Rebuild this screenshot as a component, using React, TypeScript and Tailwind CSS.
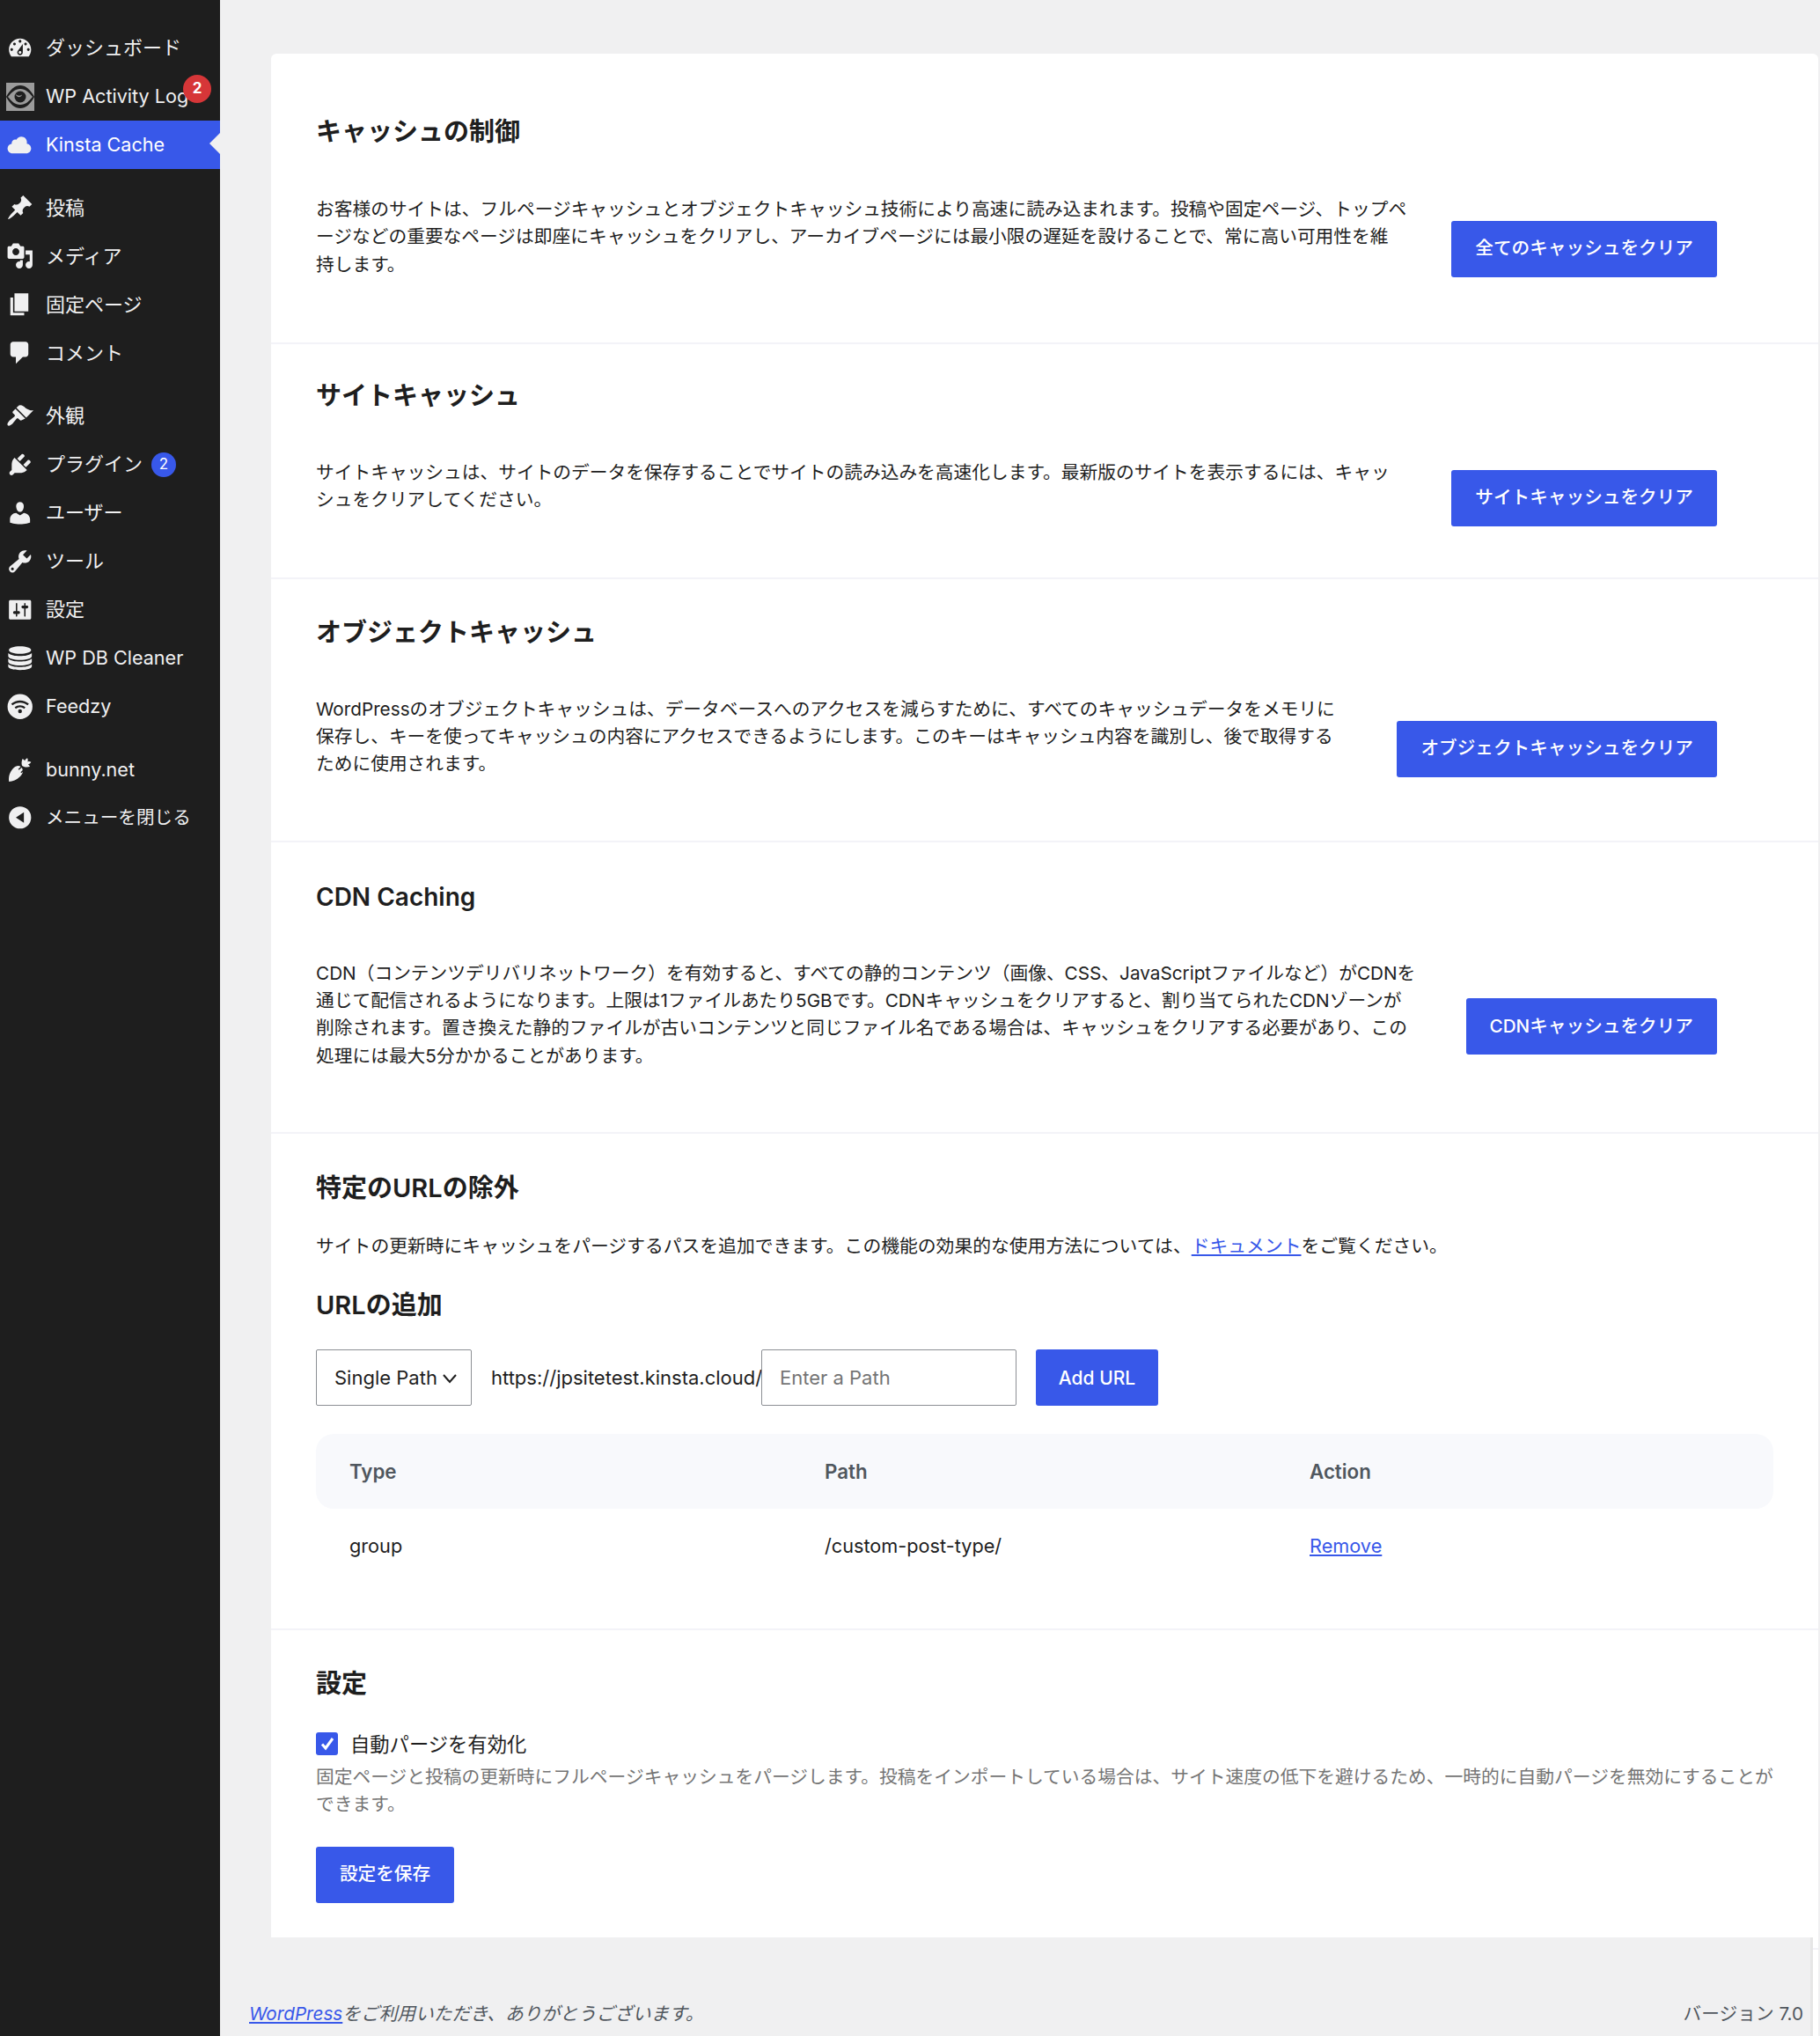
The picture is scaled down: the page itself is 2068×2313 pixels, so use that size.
import React from 'react';

const FONT = 'font-[Inter,"Noto_Sans_CJK_JP",sans-serif]';

const dash: Record<string, string> = {
  dashboard: 'M3.76 16h12.48c1.1-1.37 1.76-3.11 1.76-5 0-4.42-3.58-8-8-8s-8 3.58-8 8c0 1.89.66 3.63 1.76 5zM10 4c.55 0 1 .45 1 1s-.45 1-1 1-1-.45-1-1 .45-1 1-1zM6 6c.55 0 1 .45 1 1s-.45 1-1 1-1-.45-1-1 .45-1 1-1zm8 0c.55 0 1 .45 1 1s-.45 1-1 1-1-.45-1-1 .45-1 1-1zm-5.37 5.55L12 7v6c0 1.1-.9 2-2 2s-2-.9-2-2c0-.57.24-1.08.63-1.45zM4 10c.55 0 1 .45 1 1s-.45 1-1 1-1-.45-1-1 .45-1 1-1zm12 0c.55 0 1 .45 1 1s-.45 1-1 1-1-.45-1-1 .45-1 1-1zm-5 3c0-.55-.45-1-1-1s-1 .45-1 1 .45 1 1 1 1-.45 1-1z',
  cloud: 'M14.9 9c1.8.2 3.1 1.7 3.1 3.5 0 1.9-1.6 3.5-3.5 3.5h-10C2.6 16 1 14.4 1 12.5 1 10.7 2.3 9.3 4.1 9 4 8.9 4 8.7 4 8.5 4 7.1 5.1 6 6.5 6c.3 0 .7.1.9.2C8.1 4.9 9.4 4 11 4c2.2 0 4 1.8 4 4 0 .4-.1.7-.1 1z',
  post: 'M10.44 3.02l1.82-1.82 6.36 6.35-1.83 1.82c-1.05-.68-2.48-.57-3.41.36l-.75.75c-.92.93-1.04 2.35-.35 3.41l-1.83 1.82-2.41-2.41-2.8 2.79c-.42.42-3.38 2.71-3.8 2.29s1.86-3.39 2.28-3.81l2.79-2.79L4.1 9.36l1.83-1.82c1.05.69 2.48.57 3.4-.36l.75-.75c.93-.92 1.05-2.35.36-3.41z',
  media: 'M13 11V4c0-.55-.45-1-1-1h-1.67L9 1H5L3.67 3H2c-.55 0-1 .45-1 1v7c0 .55.45 1 1 1h10c.55 0 1-.45 1-1zM7 4.5c1.38 0 2.5 1.12 2.5 2.5S8.38 9.5 7 9.5 4.5 8.38 4.5 7 5.62 4.5 7 4.5zM14 6h5v10.5c0 1.38-1.12 2.5-2.5 2.5S14 17.88 14 16.5s1.12-2.5 2.5-2.5c.17 0 .34.02.5.05V9h-3V6zm-4 8.05V13h2v3.5c0 1.38-1.12 2.5-2.5 2.5S7 17.88 7 16.5 8.12 14 9.5 14c.17 0 .34.02.5.05z',
  page: 'M6 15V2h10v13H6zm-1 1h8v2H3V5h2v11z',
  comments: 'M5 2h9c1.1 0 2 .9 2 2v7c0 1.1-.9 2-2 2h-2l-5 5v-5H5c-1.1 0-2-.9-2-2V4c0-1.1.9-2 2-2z',
  appearance: 'M14.48 11.06L7.41 3.99l1.5-1.5c.5-.56 2.3-.47 3.51.32 1.21.8 1.43 1.28 2.91 2.1 1.18.64 2.45 1.26 4.45.85zm-.71.71L6.7 4.7 4.93 6.47c-.39.39-.39 1.02 0 1.41l1.06 1.06c.39.39.39 1.03 0 1.42-.6.6-1.43 1.11-2.21 1.69-.35.26-.7.53-1.01.84-1.34 1.34-2.37 2.95-1.58 3.74s2.4-.24 3.74-1.58c.31-.31.58-.66.84-1.01.58-.78 1.09-1.61 1.69-2.21.39-.39 1.03-.39 1.42 0l1.06 1.06c.39.39 1.02.39 1.41 0z',
  plugins: 'M13.11 4.36L9.87 7.6 8 5.73l3.24-3.24c.35-.34 1.05-.2 1.56.32.52.51.66 1.21.31 1.55zm-8 1.77l.91-1.12 9.01 9.01-1.19.84c-.71.71-2.63 1.16-3.82 1.16H6.14L4.9 17.26c-.59.59-1.54.59-2.12 0-.59-.58-.59-1.53 0-2.12l1.24-1.24v-3.88c0-1.13.4-3.19 1.09-3.89zm7.26 3.97l3.24-3.24c.34-.35 1.04-.21 1.55.31.52.51.66 1.21.31 1.55l-3.24 3.25z',
  users: 'M10 9.25c-2.27 0-2.73-3.44-2.73-3.44C7 4.02 7.82 2 9.97 2c2.16 0 2.98 2.02 2.71 3.81 0 0-.41 3.44-2.68 3.44zm0 2.57L12.72 10c2.39 0 4.52 2.33 4.52 4.53v2.49s-3.65 1.13-7.24 1.13c-3.65 0-7.24-1.13-7.24-1.13v-2.49c0-2.25 1.94-4.48 4.47-4.48z',
  tools: 'M16.68 9.77c-1.34 1.34-3.3 1.67-4.95.99l-5.41 6.52c-.99.99-2.59.99-3.58 0s-.99-2.59 0-3.57l6.52-5.42c-.68-1.65-.35-3.61.99-4.95 1.28-1.28 3.12-1.62 4.72-1.06l-2.89 2.89 2.82 2.82 2.86-2.87c.53 1.58.18 3.39-1.08 4.65zM3.81 16.21c.4.39 1.04.39 1.43 0 .4-.4.4-1.04 0-1.43-.39-.4-1.03-.4-1.43 0-.39.39-.39 1.03 0 1.43z',
  settings: 'M18 16V4c0-.55-.45-1-1-1H3c-.55 0-1 .45-1 1v12c0 .55.45 1 1 1h14c.55 0 1-.45 1-1zM8 11h1c.55 0 1 .45 1 1s-.45 1-1 1H8v1.5c0 .28-.22.5-.5.5s-.5-.22-.5-.5V13H6c-.55 0-1-.45-1-1s.45-1 1-1h1V5.5c0-.28.22-.5.5-.5s.5.22.5.5V11zm5-2h-1c-.55 0-1-.45-1-1s.45-1 1-1h1V5.5c0-.28.22-.5.5-.5s.5.22.5.5V7h1c.55 0 1 .45 1 1s-.45 1-1 1h-1v5.5c0 .28-.22.5-.5.5s-.5-.22-.5-.5V9z',
  db: 'M10 1.500c4.400 0 8 1.100 8 2.700s-3.600 2.700-8 2.700-8-1.100-8-2.700 3.600-2.700 8-2.700zM1.500 6.300c1.600 1.500 5 2.100 8.500 2.100s6.900-.6 8.500-2.100v2.300c0 1.500-3.800 2.700-8.500 2.700s-8.500-1.200-8.500-2.700zM1.500 10.300c1.600 1.500 5 2.100 8.500 2.100s6.900-.6 8.500-2.100v2.300c0 1.500-3.800 2.700-8.500 2.700s-8.500-1.200-8.500-2.700zM1.500 14.300c1.600 1.500 5 2.100 8.500 2.100s6.900-.6 8.500-2.100v1.700c0 1.400-3.800 2.500-8.500 2.500s-8.500-1.100-8.500-2.500z',
  feedzy: 'M10 1a9 9 0 1 0 0 18 9 9 0 0 0 0-18zm0 13.700a1.400 1.400 0 1 1 0-2.800 1.400 1.400 0 0 1 0 2.800zm3-3.100c-1.800-1.400-4.200-1.400-6 0l-.9-1.100c2.300-1.900 5.500-1.900 7.800 0zm2.400-2.500c-3.200-2.700-7.600-2.700-10.800 0l-1-1.100c3.700-3.300 9.100-3.300 12.800 0z',
  carrot: 'M2 18.500c-.3-2.800.4-6.300 3-9 1.700-1.800 4-2.600 5.500-1.300L8.700 10l.6.7 1.900-1.800c.5.600.7 1.200.7 1.900L10.400 12.300l.6.6 1-1c-.1 1.300-.9 2.400-2 3.500-2.400 2.300-5.300 3.500-8 3.600zM11.300 7c-.3-1.400-.1-2.900.5-4.400.7.300 1.200.8 1.600 1.400.4-.8 1-1.500 1.900-1.900.4.800.5 1.700.2 2.600.8-.3 1.700-.3 2.500.2-.5.900-1.300 1.400-2.200 1.800.6.400 1.100.9 1.300 1.600-1.500.4-3 .4-4.400-.1-.7-.2-1.300-.6-1.400-1.200z',
  collapse: 'M10 2a8 8 0 1 0 0 16 8 8 0 0 0 0-16zm2.800 4.200v7.600L7 10z',
};

function Dash({ name }: { name: string }) {
  return (
    <svg viewBox="0 0 20 20" className="w-[31.5px] h-[31.5px] shrink-0 fill-[#f0f0f1]">
      <path d={dash[name]} fillRule="evenodd" />
    </svg>
  );
}

function EyeIcon() {
  return (
    <svg viewBox="0 0 32 32" className="w-[32px] h-[32px] shrink-0">
      <rect width="32" height="32" fill="#9b9b9b" />
      <path d="M0 16C5 7 10 3 16 3s11 4 16 13c-5 9-10 13-16 13S5 25 0 16z" fill="#1e1e1e" />
      <path d="M2 16c4-5 8-9 14-9s10 4 14 9c-4 5-8 9-14 9S6 21 2 16z" fill="#9b9b9b" />
      <circle cx="16" cy="16" r="6.500" fill="#1e1e1e" />
      <path d="M10.500 12.500c2 2.500 5 3 7.500 1-1 3.500-6 4-7.500-1z" fill="#9b9b9b" />
    </svg>
  );
}

type Item = { label: string; icon?: string; active?: boolean; mt?: boolean; badge?: string; size: string };

const CJK = 'text-[22px]';
const LATIN = 'text-[21.6px]';

const menu: Item[] = [
  { label: 'ダッシュボード', icon: 'dashboard', size: CJK },
  { label: 'WP Activity Log', badge: 'red', size: LATIN },
  { label: 'Kinsta Cache', icon: 'cloud', active: true, size: LATIN },
  { label: '投稿', icon: 'post', mt: true, size: CJK },
  { label: 'メディア', icon: 'media', size: CJK },
  { label: '固定ページ', icon: 'page', size: CJK },
  { label: 'コメント', icon: 'comments', size: CJK },
  { label: '外観', icon: 'appearance', mt: true, size: CJK },
  { label: 'プラグイン', icon: 'plugins', badge: 'blue', size: CJK },
  { label: 'ユーザー', icon: 'users', size: CJK },
  { label: 'ツール', icon: 'tools', size: CJK },
  { label: '設定', icon: 'settings', size: CJK },
  { label: 'WP DB Cleaner', icon: 'db', size: LATIN },
  { label: 'Feedzy', icon: 'feedzy', size: LATIN },
  { label: 'bunny.net', icon: 'carrot', mt: true, size: LATIN },
  { label: 'メニューを閉じる', icon: 'collapse', size: 'text-[20.6px]' },
];

function Sidebar() {
  return (
    <aside className="w-[250px] shrink-0 bg-[#1e1e1e] pt-[27px]">
      {menu.map(m => (
        <div
          key={m.label}
          className={`relative h-[55px] flex items-center whitespace-nowrap ${m.size} ${m.mt ? 'mt-[16.5px]' : ''} ${m.active ? 'bg-[#3858e9] text-white' : 'text-[#f0f0f1]'}`}
        >
          <div className="w-[52px] shrink-0 pl-[7px]">
            <div className="w-[32px] flex justify-center">{m.icon ? <Dash name={m.icon} /> : <EyeIcon />}</div>
          </div>
          <span>{m.label}</span>
          {m.badge === 'red' && (
            <span className="absolute left-[208px] top-[3px] w-[32px] h-[32px] rounded-full bg-[#d63638] text-white text-[17px] font-bold flex items-center justify-center">2</span>
          )}
          {m.badge === 'blue' && (
            <span className="ml-[10px] w-[28px] h-[28px] rounded-full bg-[#3858e9] text-white text-[17px] flex items-center justify-center">2</span>
          )}
          {m.active && (
            <span className="absolute right-0 top-[14px] border-y-[12px] border-y-transparent border-r-[12px] border-r-[#f0f0f1]" />
          )}
        </div>
      ))}
    </aside>
  );
}

function CacheSection({ title, lines, btn, pt, gap, pb }: { title: React.ReactNode; lines: string[]; btn: string; pt: string; gap: string; pb: string }) {
  return (
    <section className={`${pt} ${pb} pl-[51px] pr-[115px] border-b-2 border-[#f3f3f8]`}>
      <h2 className="text-[29px] leading-[40px] font-semibold text-[#1e1e1e]">{title}</h2>
      <div className={`${gap} flex items-center justify-between`}>
        <p className="text-[20.72px] leading-[31.3px] text-[#1e1e1e] whitespace-nowrap">
          {lines.map((l, i) => (
            <React.Fragment key={i}>
              {l}
              {i < lines.length - 1 && <br />}
            </React.Fragment>
          ))}
        </p>
        <button className="translate-y-[14px] h-[64px] px-[27px] rounded-[3px] bg-[#3858e9] text-white text-[20.65px] font-medium whitespace-nowrap">
          {btn}
        </button>
      </div>
    </section>
  );
}

function CardContent() {
  return (
    <div className="bg-white rounded-t-[6px]">
      <CacheSection
        title="キャッシュの制御"
        lines={[
          'お客様のサイトは、フルページキャッシュとオブジェクトキャッシュ技術により高速に読み込まれます。投稿や固定ページ、トップペ',
          'ージなどの重要なページは即座にキャッシュをクリアし、アーカイブページには最小限の遅延を設けることで、常に高い可用性を維',
          '持します。',
        ]}
        btn="全てのキャッシュをクリア"
        pt="pt-[69px]"
        gap="mt-[52px]"
        pb="pb-[73px]"
      />
      <CacheSection
        title="サイトキャッシュ"
        lines={[
          'サイトキャッシュは、サイトのデータを保存することでサイトの読み込みを高速化します。最新版のサイトを表示するには、キャッ',
          'シュをクリアしてください。',
        ]}
        btn="サイトキャッシュをクリア"
        pt="pt-[39px]"
        gap="mt-[50px]"
        pb="pb-[72px]"
      />
      <CacheSection
        title="オブジェクトキャッシュ"
        lines={[
          'WordPressのオブジェクトキャッシュは、データベースへのアクセスを減らすために、すべてのキャッシュデータをメモリに',
          '保存し、キーを使ってキャッシュの内容にアクセスできるようにします。このキーはキャッシュ内容を識別し、後で取得する',
          'ために使用されます。',
        ]}
        btn="オブジェクトキャッシュをクリア"
        pt="pt-[41px]"
        gap="mt-[51px]"
        pb="pb-[71px]"
      />
      <CacheSection
        title={<span className="text-[28px]">CDN Caching</span>}
        lines={[
          'CDN（コンテンツデリバリネットワーク）を有効すると、すべての静的コンテンツ（画像、CSS、JavaScriptファイルなど）がCDNを',
          '通じて配信されるようになります。上限は1ファイルあたり5GBです。CDNキャッシュをクリアすると、割り当てられたCDNゾーンが',
          '削除されます。置き換えた静的ファイルが古いコンテンツと同じファイル名である場合は、キャッシュをクリアする必要があり、この',
          '処理には最大5分かかることがあります。',
        ]}
        btn="CDNキャッシュをクリア"
        pt="pt-[42px]"
        gap="mt-[51px]"
        pb="pb-[71px]"
      />

      <section className="pt-[42px] pb-[52px] pl-[51px] pr-[51px] border-b-2 border-[#f3f3f8]">
        <h2 className="text-[29px] leading-[40px] font-semibold text-[#1e1e1e]">特定のURLの除外</h2>
        <p className="mt-[30.5px] text-[20.8px] leading-[31px] text-[#1e1e1e] whitespace-nowrap">
          サイトの更新時にキャッシュをパージするパスを追加できます。この機能の効果的な使用方法については、
          <a className="text-[#3858e9] underline">ドキュメント</a>をご覧ください。
        </p>
        <h3 className="mt-[31.5px] text-[29px] leading-[40px] font-semibold text-[#1e1e1e]">URLの追加</h3>
        <div className="mt-[30.5px] flex items-center h-[64px] text-[#1e1e1e] text-[22px]">
          <div className="w-[177px] h-[64px] border border-[#8c8f94] rounded-[2px] flex items-center pl-[20px] gap-[4px] whitespace-nowrap">
            Single Path
            <svg viewBox="0 0 20 20" className="w-[20px] h-[20px] fill-none stroke-[#1e1e1e] stroke-2">
              <path d="M3 7l7 8 7-8" />
            </svg>
          </div>
          <span className="ml-[22px] w-[307px] whitespace-nowrap">https://jpsitetest.kinsta.cloud/</span>
          <div className="w-[290px] h-[64px] border border-[#8c8f94] rounded-[2px] flex items-center pl-[20px] text-[#757575]">Enter a Path</div>
          <button className="ml-[22px] w-[139px] h-[64px] rounded-[3px] bg-[#3858e9] text-white text-[21px] font-medium">Add URL</button>
        </div>
        <div className="mt-[31.5px] h-[85px] rounded-[20px] bg-[#f8f9fc] grid grid-cols-[540px_551px_1fr] items-center pl-[38px] text-[22.3px] font-semibold text-[#50575e]">
          <div>Type</div>
          <div>Path</div>
          <div>Action</div>
        </div>
        <div className="h-[84px] grid grid-cols-[540px_551px_1fr] items-center pl-[38px] text-[21.7px] text-[#1e1e1e]">
          <div>group</div>
          <div>/custom-post-type/</div>
          <a className="text-[#3858e9] underline">Remove</a>
        </div>
      </section>

      <section className="pt-[41px] pb-[39.5px] pl-[51px] pr-[51px]">
        <h2 className="text-[29px] leading-[40px] font-semibold text-[#1e1e1e]">設定</h2>
        <label className="mt-[34.5px] flex items-center gap-[14px] h-[28px]">
          <span className="w-[25px] h-[26px] rounded-[3px] bg-[#3858e9] flex items-center justify-center">
            <svg viewBox="0 0 20 20" className="w-[20px] h-[20px] fill-none stroke-white stroke-[3]">
              <path d="M4 10.500l4 4.500 8-11" />
            </svg>
          </span>
          <span className="text-[22.3px] text-[#1e1e1e]">自動パージを有効化</span>
        </label>
        <p className="mt-[7.5px] text-[20.75px] leading-[31px] text-[#757575] whitespace-nowrap">
          固定ページと投稿の更新時にフルページキャッシュをパージします。投稿をインポートしている場合は、サイト速度の低下を避けるため、一時的に自動パージを無効にすることが
          <br />
          できます。
        </p>
        <button className="mt-[33px] h-[64px] w-[157px] rounded-[3px] bg-[#3858e9] text-white text-[20.65px] font-medium">設定を保存</button>
      </section>
    </div>
  );
}

export default function App() {
  return (
    <div className={`${FONT} w-[2068px] h-[2313px] flex bg-[#f0f0f1] overflow-hidden`}>
      <Sidebar />
      <main className="flex-1 min-w-0 flex flex-col">
        <div className="pt-[61px] pl-[58px] pr-[2px]">
          <CardContent />
        </div>
        <div className="flex-1 flex pr-[2px]">
          <footer className="flex-1 pt-[71px] pl-[33px] pr-[8px] flex justify-between text-[#50575e] text-[20.7px]">
            <p className="italic">
              <a className="text-[#3858e9] underline">WordPress</a>をご利用いただき、ありがとうございます。
            </p>
            <p>バージョン 7.0</p>
          </footer>
          <div className="w-[3px] bg-[#e6e6e6]" />
          <div className="w-[6px] bg-white">
            <div className="mt-[12px] h-[2px] bg-[#f3f3f8]" />
          </div>
        </div>
      </main>
    </div>
  );
}
